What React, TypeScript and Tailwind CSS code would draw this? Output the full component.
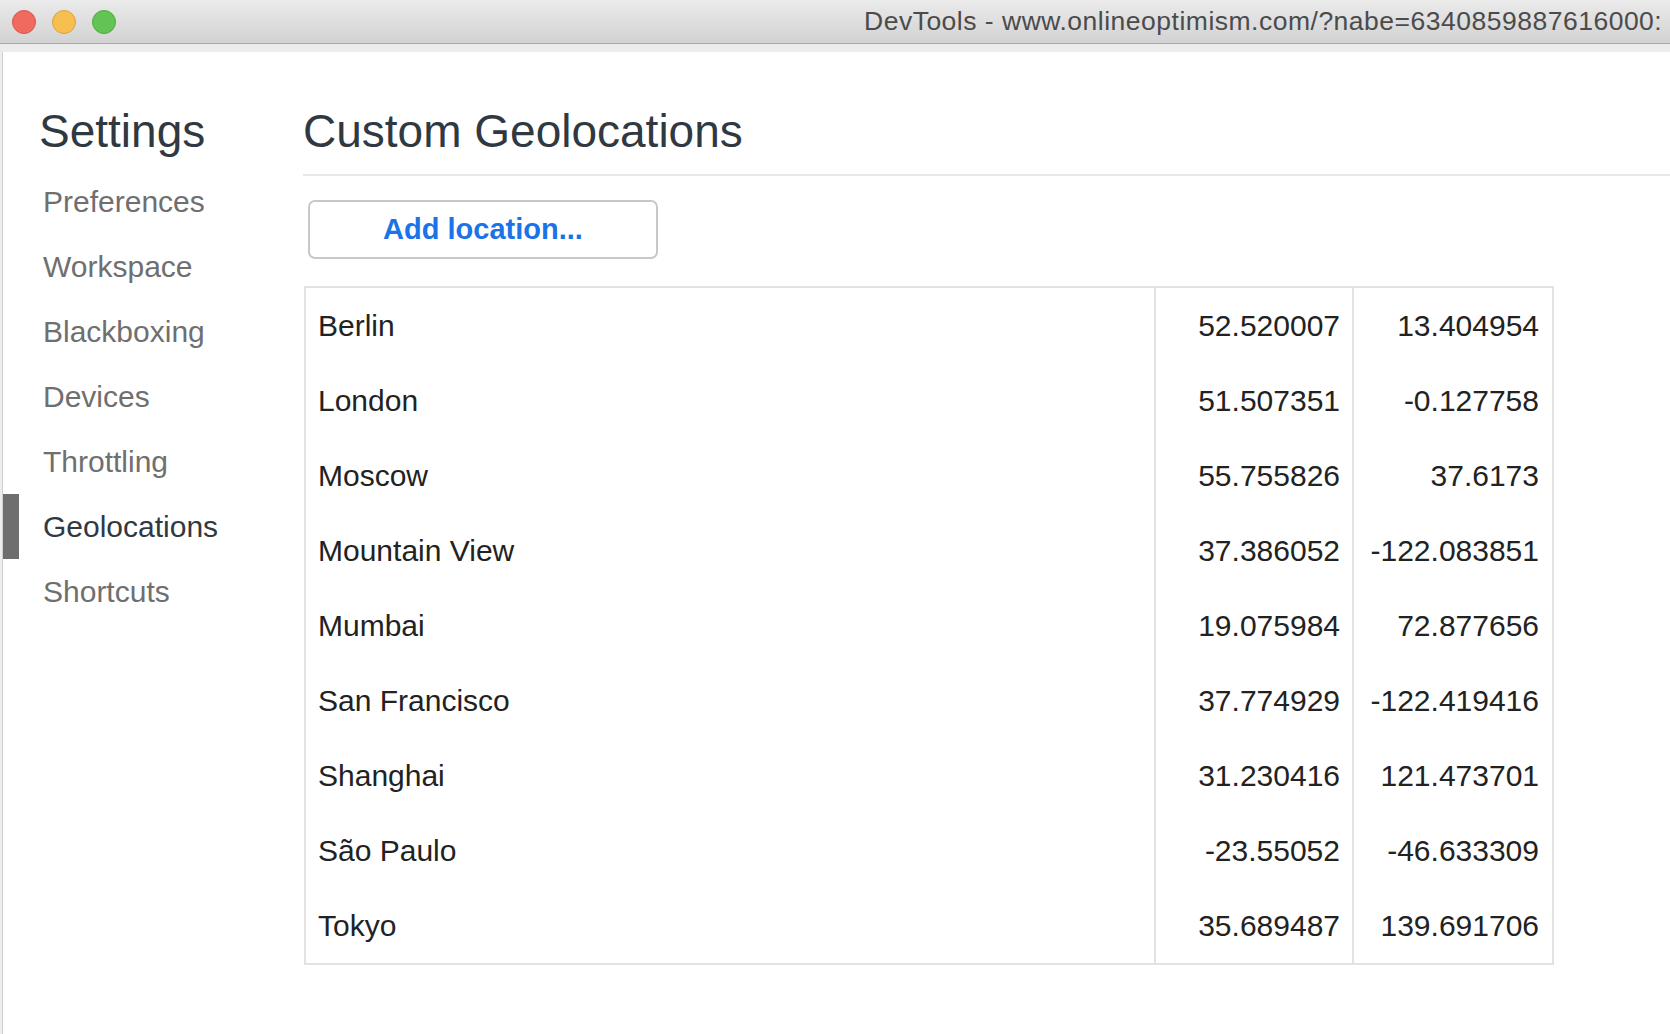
import React from "react";

// ============ DATA ============

const sections = [
  "Preferences",
  "Workspace",
  "Blackboxing",
  "Devices",
  "Throttling",
  "Geolocations",
  "Shortcuts",
];

const locations = [
  { name: "Berlin", lat: "52.520007", long: "13.404954" },
  { name: "London", lat: "51.507351", long: "-0.127758" },
  { name: "Moscow", lat: "55.755826", long: "37.6173" },
  { name: "Mountain View", lat: "37.386052", long: "-122.083851" },
  { name: "Mumbai", lat: "19.075984", long: "72.877656" },
  { name: "San Francisco", lat: "37.774929", long: "-122.419416" },
  { name: "Shanghai", lat: "31.230416", long: "121.473701" },
  { name: "São Paulo", lat: "-23.55052", long: "-46.633309" },
  { name: "Tokyo", lat: "35.689487", long: "139.691706" },
];

// ============ TITLE BAR ============

function TitleBar() {
  return (
    <div className="flex h-[44px] items-center border-b border-[#a9a9a9] bg-gradient-to-b from-[#ebebeb] to-[#d2d2d2]">
      <div className="flex shrink-0 items-center gap-[16px] pl-[12px]">
        <span className="h-[24px] w-[24px] rounded-full border border-[#d9544a] bg-[#ef6b5f]" />
        <span className="h-[24px] w-[24px] rounded-full border border-[#dca23c] bg-[#f6bf4f]" />
        <span className="h-[24px] w-[24px] rounded-full border border-[#4fa93f] bg-[#61c454]" />
      </div>
      <div className="ml-[748px] min-w-0 flex-1 overflow-hidden whitespace-nowrap text-[26.5px] leading-none tracking-[0.5px] text-[#4b4b4b]">
        DevTools - www.onlineoptimism.com/?nabe=6340859887616000:
      </div>
    </div>
  );
}

// ============ SIDEBAR ============

function Sidebar() {
  return (
    <div className="w-[298px] shrink-0">
      <h1 className="ml-[36px] mt-[56px] text-[46px] leading-none text-[#303942]">
        Settings
      </h1>
      <div className="mt-[15px] flex flex-col">
        {sections.map((section) => {
          const selected = section === "Geolocations";
          return (
            <div key={section} className="flex h-[65px] items-center">
              <div
                className={`h-full w-[16px] ${selected ? "bg-[#6e6e6e]" : ""}`}
              />
              <span
                className={`ml-[24px] text-[30px] leading-none ${
                  selected ? "text-[#303942]" : "text-[#6f6f6f]"
                }`}
              >
                {section}
              </span>
            </div>
          );
        })}
      </div>
    </div>
  );
}

// ============ LOCATIONS TABLE ============

function LocationsTable() {
  return (
    <div className="mt-[27px] w-[1250px] border-2 border-[#e2e2e2]">
      <div className="grid grid-cols-[848px_198px_200px] text-[30px] text-[#222222]">
        {locations.map((loc) => (
          <React.Fragment key={loc.name}>
            <div className="flex h-[75px] items-center pl-[12px]">
              {loc.name}
            </div>
            <div className="flex h-[75px] items-center justify-end border-l-2 border-[#e2e2e2] pr-[12px]">
              {loc.lat}
            </div>
            <div className="flex h-[75px] items-center justify-end border-l-2 border-[#e2e2e2] pr-[13px]">
              {loc.long}
            </div>
          </React.Fragment>
        ))}
      </div>
    </div>
  );
}

export default function App() {
  return (
    <div
      className="h-[1034px] w-[1670px] overflow-hidden bg-white"
      style={{ fontFamily: '"Liberation Sans", Arial, sans-serif' }}
    >
      <TitleBar />
      <div className="h-[8px] bg-[#ececec]" />
      <div className="flex h-[982px]">
        {/* window edge behind */}
        <div className="w-[3px] shrink-0 border-r border-[#cfcfcf] bg-[#ededed]" />
        <div className="flex flex-1 bg-white">
          <Sidebar />

          {/* Main */}
          <div className="flex-1">
            <div className="ml-[2px] border-b-2 border-[#e8e8e8] pb-[20px] pt-[56px]">
              <h2 className="text-[46px] leading-none text-[#303942]">
                Custom Geolocations
              </h2>
            </div>
            <button className="ml-[7px] mt-[24px] h-[59px] w-[350px] rounded-[7px] border-2 border-[#c8c8c8] bg-white text-[29px] font-semibold text-[#1a73e8]">
              Add location...
            </button>
            <div className="ml-[3px]">
              <LocationsTable />
            </div>
          </div>
        </div>
      </div>
    </div>
  );
}
